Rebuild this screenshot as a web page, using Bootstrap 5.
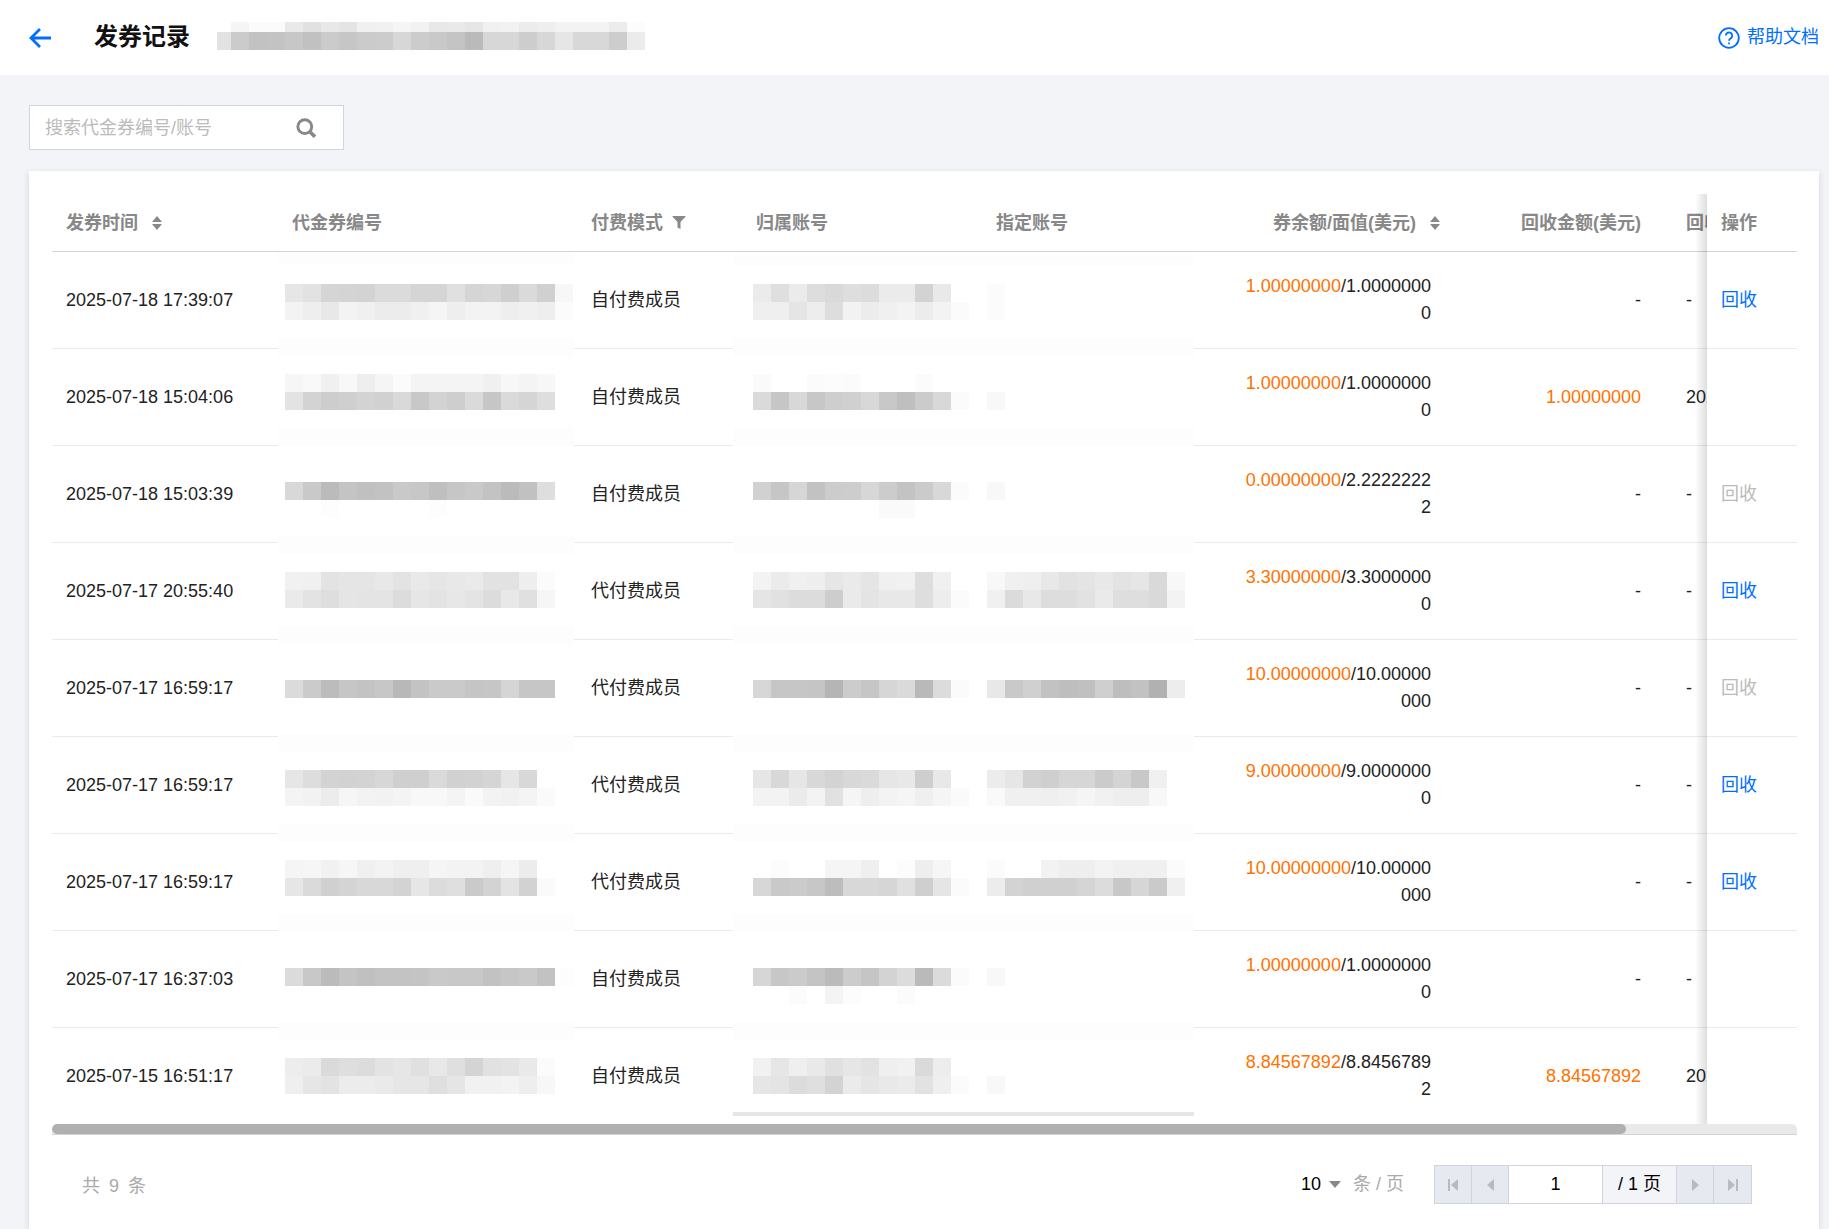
<!DOCTYPE html>
<html lang="zh-CN">
<head>
<meta charset="utf-8">
<title>发券记录</title>
<link href="https://cdn.jsdelivr.net/npm/bootstrap@5.3.0/dist/css/bootstrap.min.css" rel="stylesheet">
<style>
html,body{height:100%;overflow:hidden}
body{background:#f2f4f8;font-family:"Liberation Sans","Noto Sans CJK SC",sans-serif;font-size:18px;color:#000;display:flex;flex-direction:column}
.top-bar{height:75px;padding:0 10px 0 29px;flex-wrap:nowrap;justify-content:flex-start}
.back-link{width:23px;height:20px;display:block;margin-right:42px}
.back-link svg{display:block}
.page-title{font-size:24px;font-weight:700;line-height:32px;margin:0 27px 2px 0;color:#111}
.help-link{color:#006eff;font-size:18px;text-decoration:none;gap:7px}
.blur-head{margin-bottom:3px}
.blur-head .blur-row:first-child{height:10px}
.blur-head .blur-px:first-child{width:14px}
.blur-row{display:flex;height:18px}
.blur-px{width:18px;flex:none}
.search-wrap{width:315px;height:45px;margin:30px 0 21px 29px;flex:none;background:#fff;border:1px solid #d0d5dd;padding:0 27px 0 15px}
.search-wrap input{border:0;padding:2px 0 0;font-size:18px;height:100%;border-radius:0;box-shadow:none;background:transparent}
.search-wrap input::placeholder{color:#bbb}
.sheet{margin:0 10px 0 29px;padding:23px 22px 0 23px;flex:1 1 auto;border:0;border-radius:0;box-shadow:0 2px 6px rgba(54,58,80,.16)}
.table-clip{overflow:hidden;width:1745px}
.voucher-table{table-layout:fixed;width:1910px;margin:0;border-collapse:separate;border-spacing:0;--bs-table-bg:transparent}
.voucher-table th{height:58px;padding:2px 14px 0;vertical-align:middle;font-weight:700;color:#888;border-bottom:1px solid #cfd5de;white-space:nowrap;background:#fff}
.voucher-table td{height:97px;padding:0 14px;vertical-align:middle;line-height:27px;color:#222;border-bottom:1px solid #e7eaef}
.voucher-table tbody tr:last-child td{border-bottom:0;height:96px}
.w-time{width:226px}.w-code{width:299px}.w-mode{width:165px}.w-acct{width:240px}.w-dest{width:245px}.w-val{width:218px}.w-back{width:227px}.w-bt{width:200px}.w-op{width:90px}
.val-cell{text-align:right;word-break:break-all}
.voucher-table th.val-head{padding-right:4px}
.voucher-table th.back-cell,.voucher-table td.back-cell{text-align:right;padding-right:31px}
.no-wrap{white-space:nowrap;overflow:hidden}
.orange,.voucher-table td.orange{color:#ff7200}
.action{color:#006eff;text-decoration:none}
.action-off{color:#bbb}
.sticky-op{position:sticky;right:0;z-index:3;background:#fff!important}
.sticky-op::before{content:"";position:absolute;left:-12px;top:0;bottom:-1px;width:12px;background:linear-gradient(to right,rgba(0,0,0,0),rgba(0,0,0,.13));pointer-events:none}
.voucher-table td.blur-cell{position:relative;vertical-align:top;padding:0}
.blur-band{position:absolute;z-index:1;height:18px;background:#fdfdfd}
.blur-code .blur-band{left:0;width:296px}
.blur-acct .blur-band{left:-9px;width:461px}
.voucher-table td.blur-code{padding-left:7px}
.voucher-table td.blur-acct{padding-left:11px}
.voucher-table td.blur-dest{padding-left:5px}
.sort-ico{margin-left:13px;vertical-align:-1px}
.filter-ico{margin-left:9px;vertical-align:0}
.fake-scroll{height:11px;background:#e9e9e9;border-bottom:1px solid #cfd5de;border-radius:5px 5px 0 0;width:1745px;overflow:hidden}
.fake-thumb{height:10px;width:1574px;background:#b0b0b0;border-radius:5px}
.pager-row{padding:30px 45px 0 30px;width:1745px}
.total-txt{color:#aaa;word-spacing:4px;padding-top:3px}
.per-page{gap:8px}
.muted-txt{color:#aaa}
.pager{height:39px;border:1px solid #d0d5dd;margin-left:30px}
.pager .btn{width:37px;height:37px;padding:0;border:0;border-right:1px solid #d0d5dd;border-radius:0;background:#e6e9ef;opacity:1;display:flex;align-items:center;justify-content:center}
.pager .btn:last-child{border-right:0}
.pager-num{width:94px;height:37px;border:0;border-right:1px solid #d0d5dd;border-radius:0;text-align:center;font-size:18px;padding:0;color:#000}
.pager-total{width:74px;height:37px;background:#f2f4f8;border-right:1px solid #d0d5dd}
</style>
</head>
<body>
<nav class="navbar bg-white top-bar flex-none">
  <a class="back-link" href="#" aria-label="返回"><svg width="23" height="20" viewBox="0 0 23 20" fill="none" stroke="#006eff" stroke-width="2.8"><path d="M22 10H2M11 1L2 10l9 9"/></svg></a>
  <h1 class="page-title">发券记录</h1>
  <div class="blur-head" data-blur="ff f5 fb fb e9 e1 e8 e4 f0 f1 f5 f2 e8 e9 e6 f1 f2 ec ee f3 f3 f3 ec fc/e2 cb c2 c3 c7 c1 cb c6 cb cc d7 cc c9 c4 ba d7 d7 cd d7 e6 d8 d8 cd eb"></div>
  <a class="help-link d-flex align-items-center ms-auto" href="#"><svg width="22" height="22" viewBox="0 0 22 22" fill="none" stroke="#006eff" stroke-width="1.8"><circle cx="11" cy="11" r="9.8"/><path d="M7.8 8.6a3.2 3.2 0 1 1 4.8 2.8c-1 .6-1.6 1.1-1.6 2.4"/><path d="M11 15.4v1.9"/></svg><span>帮助文档</span></a>
</nav>

<div class="search-wrap d-flex align-items-center">
  <input class="form-control" type="text" placeholder="搜索代金券编号/账号">
  <svg class="flex-none" width="22" height="22" viewBox="0 0 22 22" fill="none" stroke="#888"><circle cx="9.5" cy="9.5" r="7.5" stroke-width="3.2"/><path d="M15 15l5.5 5.5" stroke-width="4"/></svg>
</div>

<div class="card sheet">
  <div class="table-clip">
    <table class="table voucher-table">
      <colgroup><col class="w-time"><col class="w-code"><col class="w-mode"><col class="w-acct"><col class="w-dest"><col class="w-val"><col class="w-back"><col class="w-bt"><col class="w-op"></colgroup>
      <thead>
        <tr>
          <th>发券时间<svg class="sort-ico" width="12" height="14" viewBox="0 0 12 14" fill="#888"><path d="M6 0l5 6H1zM6 14L1 8h10z"/></svg></th>
          <th>代金券编号</th>
          <th>付费模式<svg class="filter-ico" width="14" height="13" viewBox="0 0 14 13" fill="#888"><path d="M0 0h14L8.5 6v7l-3-1.5V6z"/></svg></th>
          <th>归属账号</th>
          <th>指定账号</th>
          <th class="text-end val-head">券余额/面值(美元)<svg class="sort-ico" width="12" height="14" viewBox="0 0 12 14" fill="#888"><path d="M6 0l5 6H1zM6 14L1 8h10z"/></svg></th>
          <th class="back-cell">回收金额(美元)</th>
          <th>回收时间</th>
          <th class="sticky-op">操作</th>
        </tr>
      </thead>
      <tbody id="voucher-rows">
        <tr><td>2025-07-18 17:39:07</td><td class="blur-cell blur-code"></td><td>自付费成员</td><td class="blur-cell blur-acct"></td><td class="blur-cell blur-dest"></td><td class="val-cell"><span class="orange">1.00000000</span>/1.00000000</td><td class="back-cell">-</td><td class="no-wrap">-</td><td class="sticky-op"><a class="action" href="#">回收</a></td></tr>
        <tr><td>2025-07-18 15:04:06</td><td class="blur-cell blur-code"></td><td>自付费成员</td><td class="blur-cell blur-acct"></td><td class="blur-cell blur-dest"></td><td class="val-cell"><span class="orange">1.00000000</span>/1.00000000</td><td class="back-cell orange">1.00000000</td><td class="no-wrap">2025-07-18 15:20:11</td><td class="sticky-op"></td></tr>
        <tr><td>2025-07-18 15:03:39</td><td class="blur-cell blur-code"></td><td>自付费成员</td><td class="blur-cell blur-acct"></td><td class="blur-cell blur-dest"></td><td class="val-cell"><span class="orange">0.00000000</span>/2.22222222</td><td class="back-cell">-</td><td class="no-wrap">-</td><td class="sticky-op"><span class="action-off">回收</span></td></tr>
        <tr><td>2025-07-17 20:55:40</td><td class="blur-cell blur-code"></td><td>代付费成员</td><td class="blur-cell blur-acct"></td><td class="blur-cell blur-dest"></td><td class="val-cell"><span class="orange">3.30000000</span>/3.30000000</td><td class="back-cell">-</td><td class="no-wrap">-</td><td class="sticky-op"><a class="action" href="#">回收</a></td></tr>
        <tr><td>2025-07-17 16:59:17</td><td class="blur-cell blur-code"></td><td>代付费成员</td><td class="blur-cell blur-acct"></td><td class="blur-cell blur-dest"></td><td class="val-cell"><span class="orange">10.00000000</span>/10.00000000</td><td class="back-cell">-</td><td class="no-wrap">-</td><td class="sticky-op"><span class="action-off">回收</span></td></tr>
        <tr><td>2025-07-17 16:59:17</td><td class="blur-cell blur-code"></td><td>代付费成员</td><td class="blur-cell blur-acct"></td><td class="blur-cell blur-dest"></td><td class="val-cell"><span class="orange">9.00000000</span>/9.00000000</td><td class="back-cell">-</td><td class="no-wrap">-</td><td class="sticky-op"><a class="action" href="#">回收</a></td></tr>
        <tr><td>2025-07-17 16:59:17</td><td class="blur-cell blur-code"></td><td>代付费成员</td><td class="blur-cell blur-acct"></td><td class="blur-cell blur-dest"></td><td class="val-cell"><span class="orange">10.00000000</span>/10.00000000</td><td class="back-cell">-</td><td class="no-wrap">-</td><td class="sticky-op"><a class="action" href="#">回收</a></td></tr>
        <tr><td>2025-07-17 16:37:03</td><td class="blur-cell blur-code"></td><td>自付费成员</td><td class="blur-cell blur-acct"></td><td class="blur-cell blur-dest"></td><td class="val-cell"><span class="orange">1.00000000</span>/1.00000000</td><td class="back-cell">-</td><td class="no-wrap">-</td><td class="sticky-op"></td></tr>
        <tr><td>2025-07-15 16:51:17</td><td class="blur-cell blur-code"></td><td>自付费成员</td><td class="blur-cell blur-acct"></td><td class="blur-cell blur-dest"></td><td class="val-cell"><span class="orange">8.84567892</span>/8.84567892</td><td class="back-cell orange">8.84567892</td><td class="no-wrap">2025-07-15 17:02:41</td><td class="sticky-op"></td></tr>
      </tbody>
    </table>
  </div>
  <div class="fake-scroll"><div class="fake-thumb"></div></div>
  <div class="pager-row d-flex align-items-center justify-content-between">
    <span class="total-txt">共 9 条</span>
    <div class="d-flex align-items-center">
      <div class="per-page d-flex align-items-center">
        <span>10</span>
        <svg width="12" height="7" viewBox="0 0 12 7" fill="#888"><path d="M0 0h12L6 7z"/></svg>
        <span class="muted-txt ms-1">条 / 页</span>
      </div>
      <div class="pager d-flex align-items-center">
        <button class="btn" type="button" disabled aria-label="首页"><svg width="10" height="12" viewBox="0 0 10 12" fill="#b5bac4"><path d="M0 0h2v12H0zM10 0v12L3 6z"/></svg></button>
        <button class="btn" type="button" disabled aria-label="上一页"><svg width="7" height="12" viewBox="0 0 7 12" fill="#b5bac4"><path d="M7 0v12L0 6z"/></svg></button>
        <input class="form-control pager-num" type="text" value="1" aria-label="页码">
        <span class="pager-total d-flex align-items-center justify-content-center">/ 1 页</span>
        <button class="btn" type="button" disabled aria-label="下一页"><svg width="7" height="12" viewBox="0 0 7 12" fill="#b5bac4"><path d="M0 0v12l7-6z"/></svg></button>
        <button class="btn" type="button" disabled aria-label="末页"><svg width="10" height="12" viewBox="0 0 10 12" fill="#b5bac4"><path d="M0 0v12l7-6zM8 0h2v12H8z"/></svg></button>
      </div>
    </div>
  </div>
</div>

<script>
var tops=[32,25,36,29,40,33,26,37,30];
var bands=[86,79,90,83,94,87,80,91,84];
var code=[
"e6 e2 d5 d4 d3 db db d5 d5 e0 d5 d7 cf da d0 f7/f3 ee e8 f3 f0 ec ec f0 f5 ee f3 f3 ee f0 ee fb",
"f6 f9 f0 f8 ee f5 fb f4 f4 f4 f4 f0 f7 f4 f7 ff/e3 d3 cd cf d3 d1 d9 c8 d3 ce da c6 da d5 de ff",
"d8 c9 bb c4 c0 c2 c9 c7 bf c6 c9 c3 bb c1 de ff/ff ff fd ff ff ff ff ff fd ff ff ff ff ff ff ff",
"f1 f0 e3 e5 e5 e8 e3 e9 e6 e8 ea e2 e2 ee fb ff/ea e3 de e5 e4 e4 dc e6 e3 e7 e4 dc e8 e0 f6 ff",
"db cb bc c6 c3 c7 b8 c3 ca ca c5 c6 d5 c6 c6 ff/ff ff ff ff ff ff ff ff ff ff ff ff ff ff ff ff",
"e6 dd d3 d2 d3 d7 cf cf da d1 d2 d5 e6 d8 ff ff/f4 f2 ec f6 f3 f2 f4 f8 f8 f4 fa f3 f1 f4 fa ff",
"f5 f6 f1 f6 f0 f3 ef ef f5 f3 f3 ef f5 ec ff ff/e6 da d0 d4 d8 d8 d3 e6 dc df ca d3 e3 d2 fa ff",
"db c8 bb c4 c0 c3 c3 c4 c9 c8 c8 c2 c6 c9 c2 fd/ff ff ff ff ff ff ff ff ff ff ff ff ff ff ff ff",
"ed eb da de dc e3 e6 e0 e8 df d4 e1 e3 e9 fb ff/ef e6 e3 ec ec ea e6 e6 df e5 f1 f1 f3 ee f7 ff"];
var acct=[
"eb df eb dd d9 de dc eb eb d3 e9 ff/ef ef e5 ed dd f2 ec f0 f3 ec f3 fb",
"fa ff ff fb fc fb ff ff ff fb ff ff/da c6 d8 c7 ce d0 d8 c8 bf cb d8 fb",
"d1 c6 d6 c2 cc cd d7 cc c3 cb d8 fb/ff ff ff ff ff ff ff fa fa ff ff ff",
"f3 eb f0 ee e6 ea e5 f0 f1 de f0 ff/e5 e1 dc dc cd ea e4 e8 e8 de ed fb",
"d7 c6 c6 c5 b5 cc c6 d6 da b9 dc fb/ff ff ff ff ff ff ff ff ff ff ff ff",
"e6 d8 e6 d8 d3 d8 da e6 e8 ce e8 ff/f3 f3 eb f3 e1 f5 ee f3 f5 ef f5 fa",
"ff fc ff ff f5 f5 ef ff fc ee f6 ff/d7 c9 cb c7 bd d8 d8 d6 e0 cf e5 fb",
"d6 c7 cb c4 bb cc c5 d3 dc ba db fb/ff ff fb ff f4 fc ff ff fb ff ff ff",
"f1 e6 ef e9 e0 e6 e2 ef f1 da ed ff/e6 e4 dc df d3 eb e5 e9 eb e2 ef fb"];
var dest=[
"fb/fb","ff/f8","f8/ff",
"f8 f0 ef e8 e2 e4 e8 e3 e6 d9 f8/f0 db e8 dd dd e2 ea de de d9 f3",
"e8 c9 d0 c2 be c0 cf be c2 b1 ed/ff",
"ec e6 d2 cf d6 d6 cb d4 c8 f0 ff/f9 f0 f0 ef f1 f5 f1 ee ee f8 ff",
"fb ff ff f2 ee ee f3 f0 f0 f0 fb/ec d3 d0 d0 d0 d5 dc c8 d6 ca f0",
"f8/ff","ff/f8"];
function paint(host,data){
  data.split("/").forEach(function(line){
    var row=document.createElement("div");row.className="blur-row";
    line.split(" ").forEach(function(g){
      var px=document.createElement("div");px.className="blur-px";
      px.style.backgroundColor="#"+g+g+g;row.appendChild(px);
    });
    host.appendChild(row);
  });
}
function addBand(td,top,h,color){
  var b=document.createElement("div");b.className="blur-band";
  b.style.top=top+"px";
  if(h){b.style.height=h+"px";}
  if(color){b.style.backgroundColor=color;}
  td.appendChild(b);
}
document.querySelectorAll("[data-blur]").forEach(function(el){paint(el,el.dataset.blur)});
document.querySelectorAll("#voucher-rows tr").forEach(function(tr,i){
  [[".blur-code",code],[".blur-acct",acct],[".blur-dest",dest]].forEach(function(p){
    var td=tr.querySelector(p[0]);
    td.style.paddingTop=tops[i]+"px";
    paint(td,p[1][i]);
    if(p[0]===".blur-dest"){return;}
    if(i===0){addBand(td,p[0]===".blur-code"?0:3,p[0]===".blur-code"?13:11);}
    if(i<8){addBand(td,bands[i]);}
    else if(p[0]===".blur-acct"){addBand(td,bands[i],4,"#e6e6e6");}
  });
});
</script>
<script src="https://cdn.jsdelivr.net/npm/bootstrap@5.3.0/dist/js/bootstrap.bundle.min.js"></script>
</body>
</html>
